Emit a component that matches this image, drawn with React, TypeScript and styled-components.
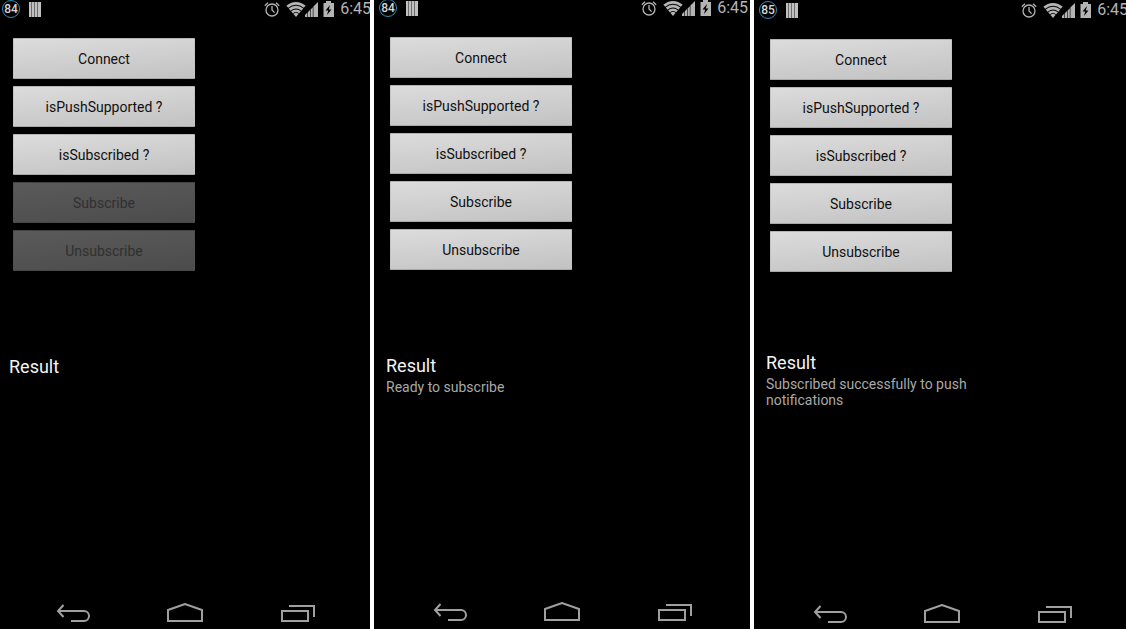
import React from "react";
import styled, { createGlobalStyle } from "styled-components";

const GlobalStyle = createGlobalStyle`
  * { box-sizing: border-box; }
  body {
    margin: 0;
    background: #fff;
    font-family: Roboto, "Liberation Sans", sans-serif;
  }
`;

const Gallery = styled.main`
  display: grid;
  grid-template-columns: 370fr 376fr 372fr;
  gap: 4px;
  min-height: 100vh;
`;

const Frame = styled.section`
  display: flex;
  min-width: 0;
  overflow: hidden;
  background: #000;
`;

const Phone = styled.div<{ $left: number; $right: number; $top: number }>`
  flex: 1;
  display: flex;
  flex-direction: column;
  margin: 0 ${(p) => -p.$right}px 0 ${(p) => -p.$left}px;
  padding: ${(p) => p.$top}px 0 ${(p) => 2 - p.$top}px;
`;

const StatusBar = styled.header`
  display: flex;
  align-items: center;
  height: 16px;
  padding: 0 2px 0 5px;
  color: #b4b4b4;
`;

const Battery = styled.span`
  display: flex;
  align-items: center;
  justify-content: center;
  flex: none;
  width: 18px;
  height: 18px;
  margin-right: 9px;
  border: 1px solid #2f8fb5;
  border-radius: 50%;
  color: #d8d8d8;
  font-size: 12px;
  font-weight: 500;
  line-height: 16px;
`;

const StatusIcons = styled.svg`
  flex: none;
  margin-left: auto;
`;

const Clock = styled.time`
  margin-left: 4px;
  font-size: 16px;
  line-height: 16px;
`;

const Actions = styled.div`
  display: flex;
  flex-direction: column;
  gap: 7px;
  width: 182px;
  margin: 21px 0 0 16px;
`;

const ActionButton = styled.button`
  height: 41px;
  padding: 0;
  border: 1px solid;
  border-color: #b4b4b4 #c4c4c4 #a8a8a8;
  border-radius: 1px;
  background: linear-gradient(175deg, #dcdcdc, #c2c2c2);
  color: #101010;
  font: 14px/16px Roboto, "Liberation Sans", sans-serif;

  &:disabled {
    border-color: #434343 #505050 #484848;
    background: linear-gradient(175deg, #5a5a5a, #4c4c4c);
    color: #303030;
  }
`;

const Result = styled.div<{ $gap: number }>`
  max-width: 248px;
  margin-top: ${(p) => p.$gap}px;
  padding-left: 12px;
`;

const ResultTitle = styled.h2`
  margin: 0;
  color: #f4f4f4;
  font-size: 18px;
  font-weight: 400;
  line-height: 24px;
`;

const ResultText = styled.p`
  margin: 1px 0 0;
  color: #a9a9a9;
  font-size: 14px;
  line-height: 16px;
`;

const NavBar = styled.nav`
  display: grid;
  grid-template-columns: repeat(3, 1fr);
  margin-top: auto;
  padding: 0 20px 4px;
`;

const NavButton = styled.button`
  display: flex;
  justify-content: center;
  padding: 0;
  border: 0;
  background: none;
  color: #a0a0a0;
`;

const Glyph = styled.svg`
  fill: none;
  stroke: currentColor;
  stroke-width: 2;
`;

function Indicators() {
  return (
    <StatusIcons width="72" height="16" viewBox="0 0 72 16" fill="none" stroke="#b4b4b4" aria-hidden="true">
      <circle cx="8" cy="9" r="6" strokeWidth="1.3" />
      <path d="M8 5v4l2.6 2.6M.8 4.8 4 1.8M15.2 4.8 12 1.8" strokeWidth="1.3" />
      <g strokeWidth="2.8">
        <path d="M23.3 5.7a12.8 12.8 0 0 1 17.4 0" />
        <path d="M25.7 8.6a9.3 9.3 0 0 1 12.6 0" />
        <path d="M28.1 11.4a5.8 5.8 0 0 1 7.8 0" />
      </g>
      <path d="M29.5 13a3.7 3.700 0 0 1 5 0L32 16z" fill="#b4b4b4" stroke="none" />
      <path
        d="M41 16v-2l2.2-2.2V16zM43.8 16v-4.8l2.2-2.2V16zM46.600 16V8.400l2.200-2.200V16zM49.400 16V5.600l4.600-4.600V16z"
        fill="#b4b4b4"
        stroke="none"
      />
      <path
        d="M62 0h5v2h3v14H59.500V2H62zM66 4l-4.500 5.600h2.700L63 14l4.500-5.500h-2.700z"
        fill="#b4b4b4"
        fillRule="evenodd"
        stroke="none"
      />
    </StatusIcons>
  );
}

function Bars() {
  return (
    <svg width="12" height="15" viewBox="0 0 12 15" fill="#c0c0c0" aria-hidden="true">
      <path d="M0 0h12v15H0z" fill="#6c6c6c" />
      <path d="M0 0h2v15H0zM3 0h2v15H3zM6 0h2v15H6zM9 0h3v15H9z" />
    </svg>
  );
}

function Navigation() {
  return (
    <NavBar aria-label="System">
      <NavButton type="button" aria-label="Back">
        <Glyph width="34" height="21" viewBox="0 0 34 21">
          <path d="M1.5 8H28a5 5 0 0 1 0 10H15M7.5 2 2 8l5.5 6" />
        </Glyph>
      </NavButton>
      <NavButton type="button" aria-label="Home">
        <Glyph width="36" height="21" viewBox="0 0 36 21">
          <path d="M1 18V7l17-6 17 6v11z" />
        </Glyph>
      </NavButton>
      <NavButton type="button" aria-label="Recent apps">
        <Glyph width="36" height="21" viewBox="0 0 36 21">
          <path d="M3 8h26v10H3zM10 3h25v11" />
        </Glyph>
      </NavButton>
    </NavBar>
  );
}

interface Screen {
  battery: number;
  left: number;
  right: number;
  top: number;
  resultGap: number;
  subscribable: boolean;
  message?: string;
}

const screens: Screen[] = [
  { battery: 84, left: 3, right: 3, top: 1, resultGap: 84, subscribable: false },
  { battery: 84, left: 0, right: 0, top: 0, resultGap: 84, subscribable: true, message: "Ready to subscribe" },
  {
    battery: 85,
    left: 0,
    right: 4,
    top: 2,
    resultGap: 79,
    subscribable: true,
    message: "Subscribed successfully to push notifications",
  },
];

export default function App() {
  return (
    <>
      <GlobalStyle />
      <Gallery>
        {screens.map((s, i) => (
          <Frame key={i}>
            <Phone $left={s.left} $right={s.right} $top={s.top}>
              <StatusBar>
                <Battery>{s.battery}</Battery>
                <Bars />
                <Indicators />
                <Clock>6:45</Clock>
              </StatusBar>
              <Actions>
                <ActionButton type="button">Connect</ActionButton>
                <ActionButton type="button">isPushSupported ?</ActionButton>
                <ActionButton type="button">isSubscribed ?</ActionButton>
                <ActionButton type="button" disabled={!s.subscribable}>Subscribe</ActionButton>
                <ActionButton type="button" disabled={!s.subscribable}>Unsubscribe</ActionButton>
              </Actions>
              <Result $gap={s.resultGap}>
                <ResultTitle>Result</ResultTitle>
                {s.message && <ResultText>{s.message}</ResultText>}
              </Result>
              <Navigation />
            </Phone>
          </Frame>
        ))}
      </Gallery>
    </>
  );
}
